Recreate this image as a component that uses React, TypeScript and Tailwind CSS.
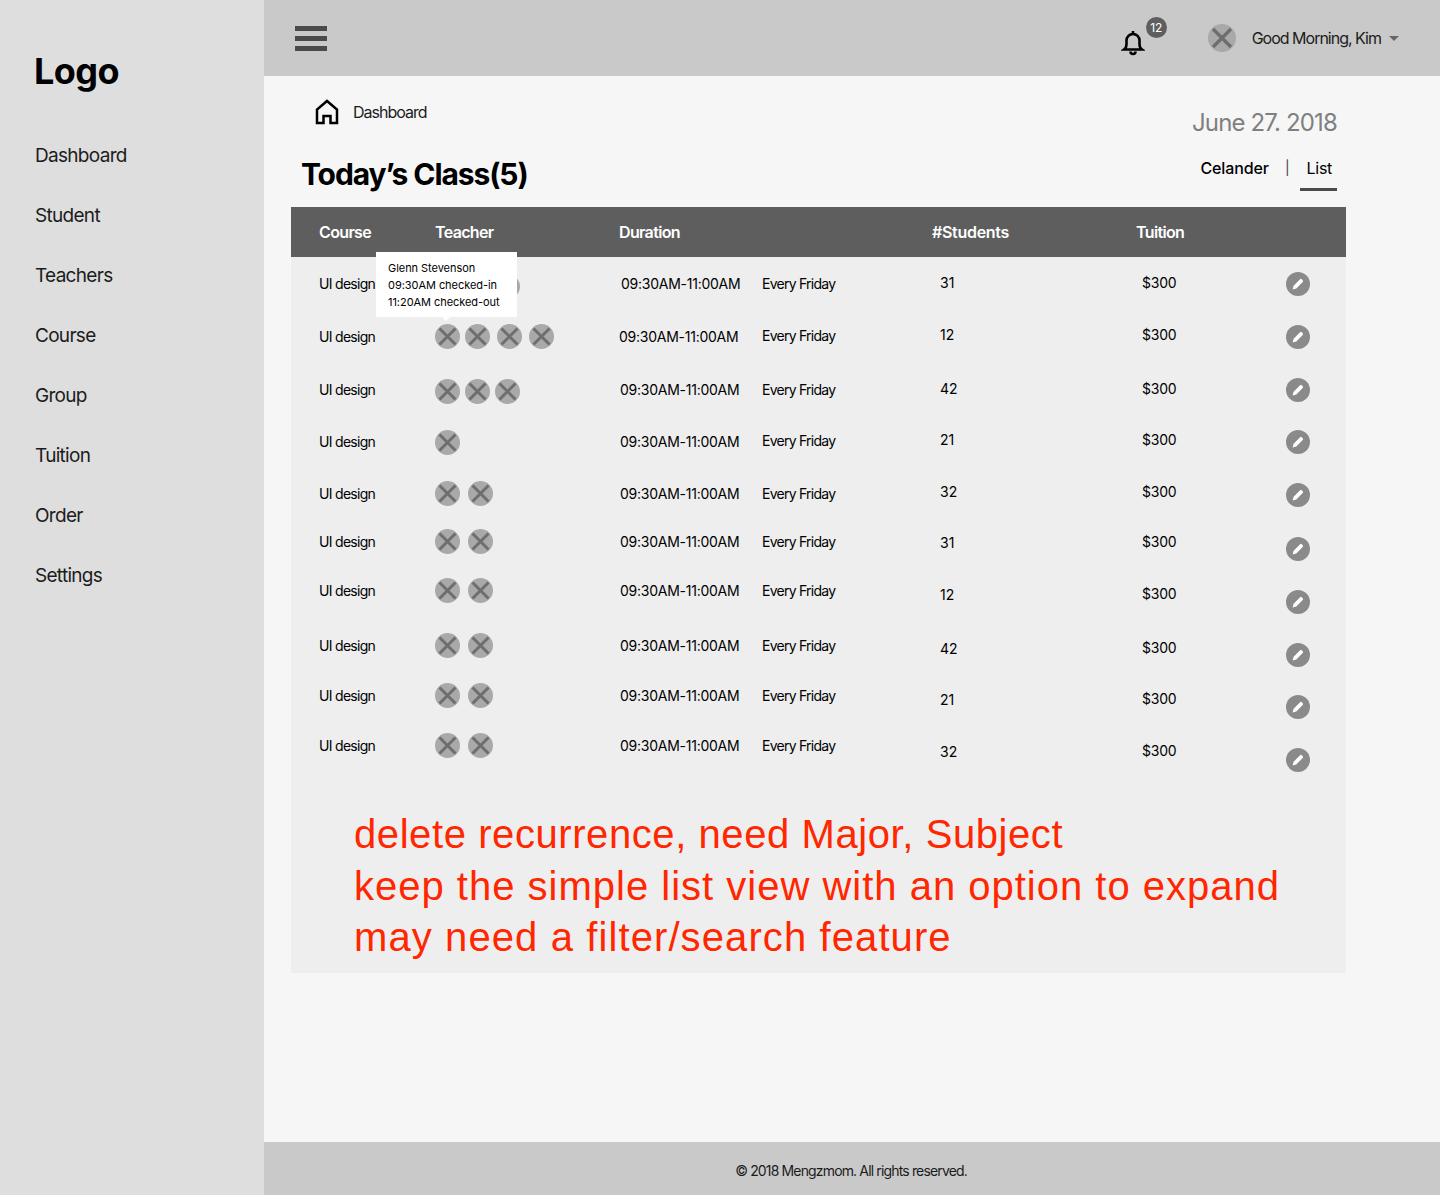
const nav = ['Dashboard', 'Student', 'Teachers', 'Course', 'Group', 'Tuition', 'Order', 'Settings']

// the mock's rows drift out of line, so each cell keeps its own vertical nudge (px)
const rows = [
  { h: 52, gaps: [0, 30, 30], dx: 1, every: 0, n: '31', nY: -1, tY: -1, eY: 1, aY: 3 },
  { h: 54, gaps: [0, 30, 32, 32], dx: -1, every: -1, n: '12', nY: -2, tY: -2, eY: 1, aY: 0 },
  { h: 52, gaps: [0, 30, 30], dx: 0, every: 0, n: '42', nY: -1, tY: -1, eY: 1, aY: 2 },
  { h: 52, gaps: [0], dx: 0, every: -1, n: '21', nY: -2, tY: -2, eY: 1, aY: 1 },
  { h: 52, gaps: [0, 33], dx: 0, every: 0, n: '32', nY: -2, tY: -2, eY: 2, aY: 0 },
  { h: 44, gaps: [0, 33], dx: 0, every: 0, n: '31', nY: 1, tY: 0, eY: 8, aY: 0 },
  { h: 54, gaps: [0, 33], dx: 0, every: 0, n: '12', nY: 4, tY: 3, eY: 12, aY: 0 },
  { h: 56, gaps: [0, 33], dx: 0, every: 0, n: '42', nY: 3, tY: 2, eY: 10, aY: 0 },
  { h: 44, gaps: [0, 33], dx: 0, every: 0, n: '21', nY: 4, tY: 3, eY: 12, aY: 0 },
  { h: 56, gaps: [0, 33], dx: 0, every: 0, n: '32', nY: 6, tY: 5, eY: 15, aY: 0 },
]

const nudge = (y: number) => ({ transform: `translateY(${y}px)` })

function Placeholder({ size, className }: { size: number; className?: string }) {
  return (
    <svg width={size} height={size} viewBox="0 0 25 25" className={className}>
      <circle cx="12.5" cy="12.5" r="12.5" fill="#a9a9a9" />
      <path d="M4.500 4.500 20.500 20.500M20.500 4.500 4.500 20.500" stroke="#6e6e6e" strokeWidth="3" />
    </svg>
  )
}

function EditIcon() {
  return (
    <svg width="24" height="24" viewBox="0 0 24 24">
      <circle cx="12" cy="12" r="12" fill="#8a8a8a" />
      <path d="M6.600 17.400l1-3.700 6.500-6.400a1.200 1.200 0 0 1 1.700 0l.9.900a1.200 1.200 0 0 1 0 1.700l-6.400 6.500z" fill="#fff" />
    </svg>
  )
}

function Row({ row }: { row: (typeof rows)[number] }) {
  return (
    <div
      className="grid grid-cols-[116px_185px_142px_178px_202px_144px_24px] items-center pl-7 text-[14px] text-black"
      style={{ height: row.h }}
    >
      <span className="tracking-[-0.7px]">UI design</span>
      <div className="flex" style={nudge(row.aY)}>
        {row.gaps.map((gap, i) => (
          <div key={i} style={{ marginLeft: i === 0 ? 0 : gap - 25 }}>
            <Placeholder size={25} />
          </div>
        ))}
      </div>
      <span className="tracking-[-0.25px]" style={{ marginLeft: row.dx }}>
        09:30AM-11:00AM
      </span>
      <span className="tracking-[-0.75px]" style={nudge(row.every)}>
        Every Friday
      </span>
      <span style={nudge(row.nY)}>{row.n}</span>
      <span className="tracking-[-0.2px]" style={nudge(row.tY)}>
        $300
      </span>
      <div style={nudge(row.eY)}>
        <EditIcon />
      </div>
    </div>
  )
}

export default function App() {
  return (
    <div className="flex min-h-[1195px] font-['Inter',sans-serif]">
      <aside className="w-[264px] shrink-0 bg-[#dedede] pl-[35px] pt-[46px]">
        <div className="-ml-px text-[36px] font-bold leading-[50px] tracking-[-0.6px] text-black">Logo</div>
        <nav className="mt-[30px] flex flex-col">
          {nav.map((item) => (
            <a key={item} className="h-[60px] text-[19px] leading-[60px] tracking-[-0.7px] text-[#1c1c1c]">
              {item}
            </a>
          ))}
        </nav>
      </aside>
      <div className="flex min-w-0 flex-1 flex-col bg-[#f6f6f6]">
        <header className="flex h-[76px] items-center bg-[#c9c9c9] pl-[31px] pr-[41px]">
          <div className="flex w-8 flex-col gap-[5px]">
            <span className="h-[5px] bg-[#4a4a4a]" />
            <span className="h-[5px] bg-[#4a4a4a]" />
            <span className="h-[5px] bg-[#4a4a4a]" />
          </div>
          <div className="relative ml-auto mt-[8px] h-6 w-6">
            <svg width="24" height="26" viewBox="0 0 24 26" fill="none" stroke="#000" strokeWidth="2.600">
              <path d="M12 1v3M3 19.500h18c-1.500-1-2.500-2.500-2.500-5.500v-3.500a6.500 6.500 0 0 0-13 0V14c0 3-1 4.500-2.500 5.500z" />
              <path d="M9.500 21.500a2.500 2.500 0 0 0 5 0" />
            </svg>
            <span className="absolute left-[25px] top-[-13px] flex h-[21px] w-[21px] items-center justify-center rounded-full bg-[#5e5e5e] text-[12px] tracking-[-0.3px] text-white">
              12
            </span>
          </div>
          <Placeholder size={28} className="ml-[63px]" />
          <span className="ml-[16px] text-[16px] tracking-[-1px] text-[#1c1c1c]">Good Morning, Kim</span>
          <span className="ml-[8px] h-0 w-0 border-x-[5px] border-t-[5px] border-x-transparent border-t-[#666]" />
        </header>
        <main className="flex-1 pl-[27px] pr-[94px]">
          <div className="flex h-[131px]">
            <div className="flex-1">
              <div className="flex h-[73px] items-center pb-[1px] pl-6">
                <svg width="24" height="26" viewBox="0 0 24 26" fill="none" stroke="#000" strokeWidth="2.500">
                  <path d="M2 24V10.500L12 2l10 8.500V24h-6.500v-7h-7v7z" />
                </svg>
                <span className="ml-[14px] text-[16px] tracking-[-1px] text-[#1c1c1c]">Dashboard</span>
              </div>
              <h1 className="pl-[10px] text-[30px] font-bold leading-[50px] tracking-[-1.1px] text-black">
                Today’s Class(5)
              </h1>
            </div>
            <div className="flex flex-col items-end pr-[9px]">
              <div className="mt-[30px] text-[24px] leading-[34px] tracking-[-0.85px] text-[#7f7f7f]">June 27. 2018</div>
              <div className="mt-[16px] flex items-start text-[16px] leading-[24px] text-black">
                <span className="font-medium tracking-[-0.1px]">Celander</span>
                <span className="ml-[16px] text-[14px] text-[#444]">|</span>
                <span className="ml-[10px] border-b-[3px] border-[#4a4a4a] pb-[8px] pl-[7px] pr-[5px] tracking-[-0.3px]">
                  List
                </span>
              </div>
            </div>
          </div>
          <section className="relative h-[766px] bg-[#eeeeee]">
            <div className="flex h-[50px] items-center bg-[#5e5e5e] text-[16px] font-semibold tracking-[-0.65px] text-white">
              <span className="ml-[28px] w-[116px]">Course</span>
              <span className="w-[184px]">Teacher</span>
              <span className="w-[313px]">Duration</span>
              <span className="w-[204px] tracking-[-0.3px]">#Students</span>
              <span>Tuition</span>
            </div>
            {rows.map((row, i) => (
              <Row key={i} row={row} />
            ))}
            <div className="absolute left-[85px] top-[45px] w-[141px] whitespace-nowrap bg-white px-3 pb-[6px] pt-[8px] text-[11px] leading-[17px] tracking-[-0.05px] text-black">
              <div>Glenn Stevenson</div>
              <div>09:30AM checked-in</div>
              <div>11:20AM checked-out</div>
              <span className="absolute left-[66px] top-full h-0 w-0 border-x-[4px] border-t-[4px] border-x-transparent border-t-white" />
            </div>
            <div className="absolute left-[63px] top-[602px] whitespace-nowrap font-['Liberation_Sans',sans-serif] text-[40px] leading-[51.500px] text-[#ff2600]">
              <div className="tracking-[0.58px]">delete recurrence, need Major, Subject</div>
              <div className="tracking-[1px]">keep the simple list view with an option to expand</div>
              <div className="tracking-[1.1px]">may need a filter/search feature</div>
            </div>
          </section>
        </main>
        <footer className="flex h-[53px] items-center justify-center bg-[#c9c9c9] pr-[2px] pt-[3px] text-[14px] tracking-[-0.85px] text-[#1c1c1c]">
          © 2018 Mengzmom. All rights reserved.
        </footer>
      </div>
    </div>
  )
}
